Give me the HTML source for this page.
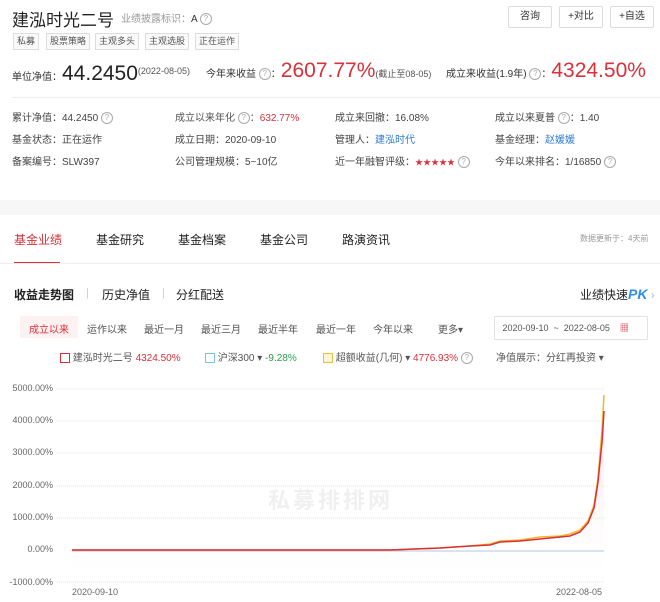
<!DOCTYPE html><html><head><meta charset="utf-8"><style>
body{margin:0;width:660px;height:602px;background:#fff;font-family:"Liberation Sans","Noto Sans CJK SC",sans-serif;color:#333;position:relative;overflow:hidden}
.a{position:absolute;white-space:nowrap}
.q{display:inline-block;width:10px;height:10px;border:1px solid #aaa;border-radius:50%;font-size:8px;line-height:10px;text-align:center;color:#aaa;vertical-align:middle}
.tag{position:absolute;top:33px;height:15px;border:1px solid #ddd;font-size:9px;line-height:15px;padding:0 3px;color:#555;background:#fafafa}
.btn{position:absolute;top:6px;height:20px;border:1px solid #ddd;font-size:10px;line-height:20px;text-align:center;color:#333;border-radius:2px}
.s{font-size:10px;color:#444}
.r{color:#d9303a}
.t{font-size:12px;color:#222}
.p{font-size:10px;color:#555}
.y{font-size:9px;color:#666;position:absolute;left:0;width:53px;text-align:right}
</style></head><body>
<div class="a" style="left:12px;top:6px;font-size:17px;color:#222">建泓时光二号</div>
<div class="a" style="left:121px;top:10px;font-size:10px;color:#999">业绩披露标识：<span style="color:#333">A</span> <span class="q">?</span></div>
<div class="btn" style="left:508px;width:42px">咨询</div>
<div class="btn" style="left:559px;width:42px">+对比</div>
<div class="btn" style="left:610px;width:42px">+自选</div>
<div class="tag" style="left:13px">私募</div><div class="tag" style="left:46px">股票策略</div><div class="tag" style="left:95px">主观多头</div><div class="tag" style="left:145px">主观选股</div><div class="tag" style="left:195px">正在运作</div>
<div class="a" style="left:12px;top:58px;font-size:10px;color:#333;line-height:26px">单位净值：<span style="font-size:21px;color:#222">44.2450</span><span style="font-size:9px;color:#555;vertical-align:6px">(2022-08-05)</span></div>
<div class="a" style="left:206px;top:58px;font-size:10px;line-height:26px">今年来收益 <span class="q">?</span>：<span class="r" style="font-size:21px">2607.77%</span><span style="font-size:9px;color:#555">(截止至08-05)</span></div>
<div class="a" style="left:446px;top:58px;font-size:10px;line-height:26px">成立来收益(1.9年) <span class="q">?</span>：<span class="r" style="font-size:21px">4324.50%</span></div>
<div class="a" style="left:12px;top:97px;width:648px;border-top:1px solid #eee"></div>
<div class="a s" style="left:12px;top:109px">累计净值：44.2450 <span class="q">?</span></div>
<div class="a s" style="left:175px;top:109px;color:#555">成立以来年化 <span class="q">?</span>：<span class="r">632.77%</span></div>
<div class="a s" style="left:335px;top:109px">成立来回撤：16.08%</div>
<div class="a s" style="left:495px;top:109px">成立以来夏普 <span class="q">?</span>：1.40</div>
<div class="a s" style="left:12px;top:131px">基金状态：正在运作</div>
<div class="a s" style="left:175px;top:131px">成立日期：2020-09-10</div>
<div class="a s" style="left:335px;top:131px">管理人：<span style="color:#2e7bd6">建泓时代</span></div>
<div class="a s" style="left:495px;top:131px">基金经理：<span style="color:#2e7bd6">赵媛媛</span></div>
<div class="a s" style="left:12px;top:153px">备案编号：SLW397</div>
<div class="a s" style="left:175px;top:153px">公司管理规模：5~10亿</div>
<div class="a s" style="left:335px;top:153px">近一年融智评级：<span class="r" style="font-size:8px">★★★★★</span> <span class="q">?</span></div>
<div class="a s" style="left:495px;top:153px">今年以来排名：1/16850 <span class="q">?</span></div>
<div class="a" style="left:0;top:200px;width:660px;height:15px;background:#f7f7f7"></div>
<div class="a t" style="left:14px;top:231px;color:#d9303a">基金业绩</div>
<div class="a" style="left:14px;top:262px;width:46px;height:2px;background:#d9303a"></div>
<div class="a t" style="left:96px;top:231px">基金研究</div>
<div class="a t" style="left:178px;top:231px">基金档案</div>
<div class="a t" style="left:260px;top:231px">基金公司</div>
<div class="a t" style="left:342px;top:231px">路演资讯</div>
<div class="a" style="left:580px;top:233px;font-size:8px;color:#999">数据更新于：4天前</div>
<div class="a" style="left:0;top:263px;width:660px;border-top:1px solid #eee"></div>
<div class="a t" style="left:14px;top:286px;font-weight:bold">收益走势图</div>
<div class="a" style="left:86px;top:287px;color:#ccc;font-size:11px">|</div>
<div class="a t" style="left:102px;top:286px">历史净值</div>
<div class="a" style="left:162px;top:287px;color:#ccc;font-size:11px">|</div>
<div class="a t" style="left:176px;top:286px">分红配送</div>
<div class="a t" style="left:580px;top:286px">业绩快速<b style="color:#2e8fe6;font-style:italic;font-size:14px">PK</b><span style="color:#bbb"> ›</span></div>
<div class="a" style="left:20px;top:316px;width:58px;height:22px;background:#fdf1f1"></div>
<div class="a p" style="left:29px;top:321px;color:#d9303a">成立以来</div>
<div class="a p" style="left:87px;top:321px">运作以来</div>
<div class="a p" style="left:144px;top:321px">最近一月</div>
<div class="a p" style="left:201px;top:321px">最近三月</div>
<div class="a p" style="left:258px;top:321px">最近半年</div>
<div class="a p" style="left:316px;top:321px">最近一年</div>
<div class="a p" style="left:373px;top:321px">今年以来</div>
<div class="a p" style="left:438px;top:321px">更多▾</div>
<div class="a" style="left:494px;top:316px;width:152px;height:22px;border:1px solid #e3e3e3;font-size:9px;line-height:22px;color:#555">&nbsp;&nbsp;&nbsp;2020-09-10 &nbsp;~ &nbsp;2022-08-05 &nbsp;&nbsp;&nbsp;<span class="r">▦</span></div>
<div class="a p" style="left:60px;top:349px"><span style="display:inline-block;width:8px;height:8px;border:1px solid #d9303a;vertical-align:middle"></span> 建泓时光二号 <span class="r">4324.50%</span></div>
<div class="a p" style="left:205px;top:349px"><span style="display:inline-block;width:8px;height:8px;border:1px solid #7cc3e8;vertical-align:middle"></span> 沪深300 ▾ <span style="color:#2a9d4a">-9.28%</span></div>
<div class="a p" style="left:323px;top:349px"><span style="display:inline-block;width:8px;height:8px;border:1px solid #e8c040;background:#fff6d8;vertical-align:middle"></span> 超额收益(几何) ▾ <span class="r">4776.93%</span> <span class="q">?</span></div>
<div class="a p" style="left:496px;top:349px">净值展示：分红再投资 ▾</div>
<div class="y" style="top:383px">5000.00%</div><div class="y" style="top:415px">4000.00%</div><div class="y" style="top:447px">3000.00%</div><div class="y" style="top:480px">2000.00%</div><div class="y" style="top:512px">1000.00%</div><div class="y" style="top:544px">0.00%</div><div class="y" style="top:577px">-1000.00%</div>
<div class="a" style="left:72px;top:587px;font-size:9px;color:#666">2020-09-10</div>
<div class="a" style="left:556px;top:587px;font-size:9px;color:#666">2022-08-05</div>
<div class="a" style="left:268px;top:483px;font-size:22px;color:#f0f0f0;font-weight:bold;letter-spacing:3px">私募排排网</div>
<svg class="a" style="left:0;top:0" width="660" height="602">
<defs><linearGradient id="g" x1="0" y1="0" x2="0" y2="1"><stop offset="0" stop-color="#f6c9c9" stop-opacity=".6"/><stop offset="1" stop-color="#fff" stop-opacity="0"/></linearGradient></defs>
<g stroke="#e6e6e6" stroke-dasharray="1 1"><line x1="57" x2="605" y1="389" y2="389"/><line x1="57" x2="605" y1="421" y2="421"/><line x1="57" x2="605" y1="453" y2="453"/><line x1="57" x2="605" y1="486" y2="486"/><line x1="57" x2="605" y1="518" y2="518"/><line x1="57" x2="605" y1="582" y2="582"/></g>
<path d="M72 550 L390 550 L440 548 L470 546 L490 544 L500 542 L520 540 L550 537 L570 534 L580 530 L588 522 L594 506 L598 480 L602 440 L604 411 L604 585 L72 585Z" fill="url(#g)"/>
<line x1="72" x2="604" y1="551" y2="551" stroke="#b8c4e0"/>
<path d="M72 550 L390 550 L440 548 L470 546 L490 544 L500 541 L520 540 L540 537 L560 536 L570 534 L580 530 L588 521 L594 505 L598 478 L602 430 L604 395" stroke="#f0b830" stroke-width="1.5" fill="none"/>
<path d="M72 550 L390 550 L440 548 L470 546 L490 545 L500 542 L520 541 L540 539 L560 537 L570 536 L580 532 L588 523 L594 508 L598 482 L602 442 L604 411" stroke="#d9303a" stroke-width="1.5" fill="none"/>
</svg>
</body></html>
